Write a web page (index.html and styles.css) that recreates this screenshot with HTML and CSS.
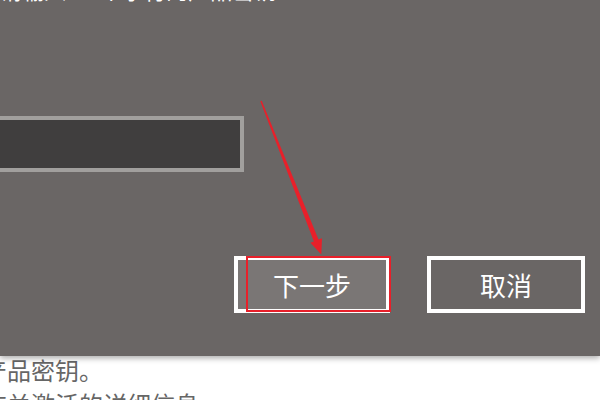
FILE: index.html
```html
<!DOCTYPE html>
<html lang="zh-CN">
<head>
<meta charset="utf-8">
<link rel="stylesheet" href="styles.css">
</head>
<body>
<div class="dialog">
  <div class="title">请输入 25 个字符的产品密钥</div>
  <div class="input"></div>
  <div class="actions">
    <div class="btn btn-primary">下一步<span class="highlight"></span></div>
    <div class="btn">取消</div>
  </div>
  <svg class="arrow" width="600" height="356" viewBox="0 0 600 356">
    <polygon fill="#e8202a" points="260.3,101.3 261.7,100.7 318.5,239.6 322,238.2 321.3,254.5 310.4,242.8 313.9,241.4"/>
  </svg>
</div>
<div class="page">
  <p class="line">产品密钥。</p>
  <p class="line">有关激活的详细信息</p>
</div>
</body>
</html>
```

FILE: styles.css
```css
html, body {
  margin: 0;
  padding: 0;
}
body {
  width: 600px;
  height: 400px;
  overflow: hidden;
  background: #ffffff;
  font-family: "Noto Sans CJK SC", "Noto Sans", sans-serif;
}
.dialog {
  position: relative;
  height: 356px;
  background: #6a6665;
  box-shadow: 0 2px 6px rgba(0, 0, 0, 0.35);
  z-index: 1;
  overflow: hidden;
}
.title {
  color: #ffffff;
  font-size: 22px;
  line-height: 22px;
  height: 22px;
  margin-top: -22px;
  white-space: nowrap;
}
.input {
  box-sizing: border-box;
  margin-top: 116px;
  margin-left: -20px;
  width: 264px;
  height: 56px;
  border: 4px solid #a19f9d;
  background: #403e3e;
}
.actions {
  display: flex;
  justify-content: flex-end;
  gap: 37px;
  margin-top: 84px;
  padding-right: 15px;
}
.btn {
  position: relative;
  box-sizing: border-box;
  width: 158px;
  height: 57px;
  border: 4px solid #ffffff;
  color: #ffffff;
  font-size: 26px;
  display: flex;
  align-items: center;
  justify-content: center;
}
.btn-primary {
  width: 156px;
  background: #7a7675;
}
.highlight {
  position: absolute;
  left: 8px;
  top: -4px;
  width: 145px;
  height: 56px;
  box-sizing: border-box;
  border: 2px solid #e8202a;
}
.arrow {
  position: absolute;
  left: 0;
  top: 0;
}
.page {
  margin-top: -3px;
  margin-left: -17px;
  color: #666666;
  font-size: 24px;
}
.line {
  margin: 0;
  line-height: 34px;
  white-space: nowrap;
}
```
